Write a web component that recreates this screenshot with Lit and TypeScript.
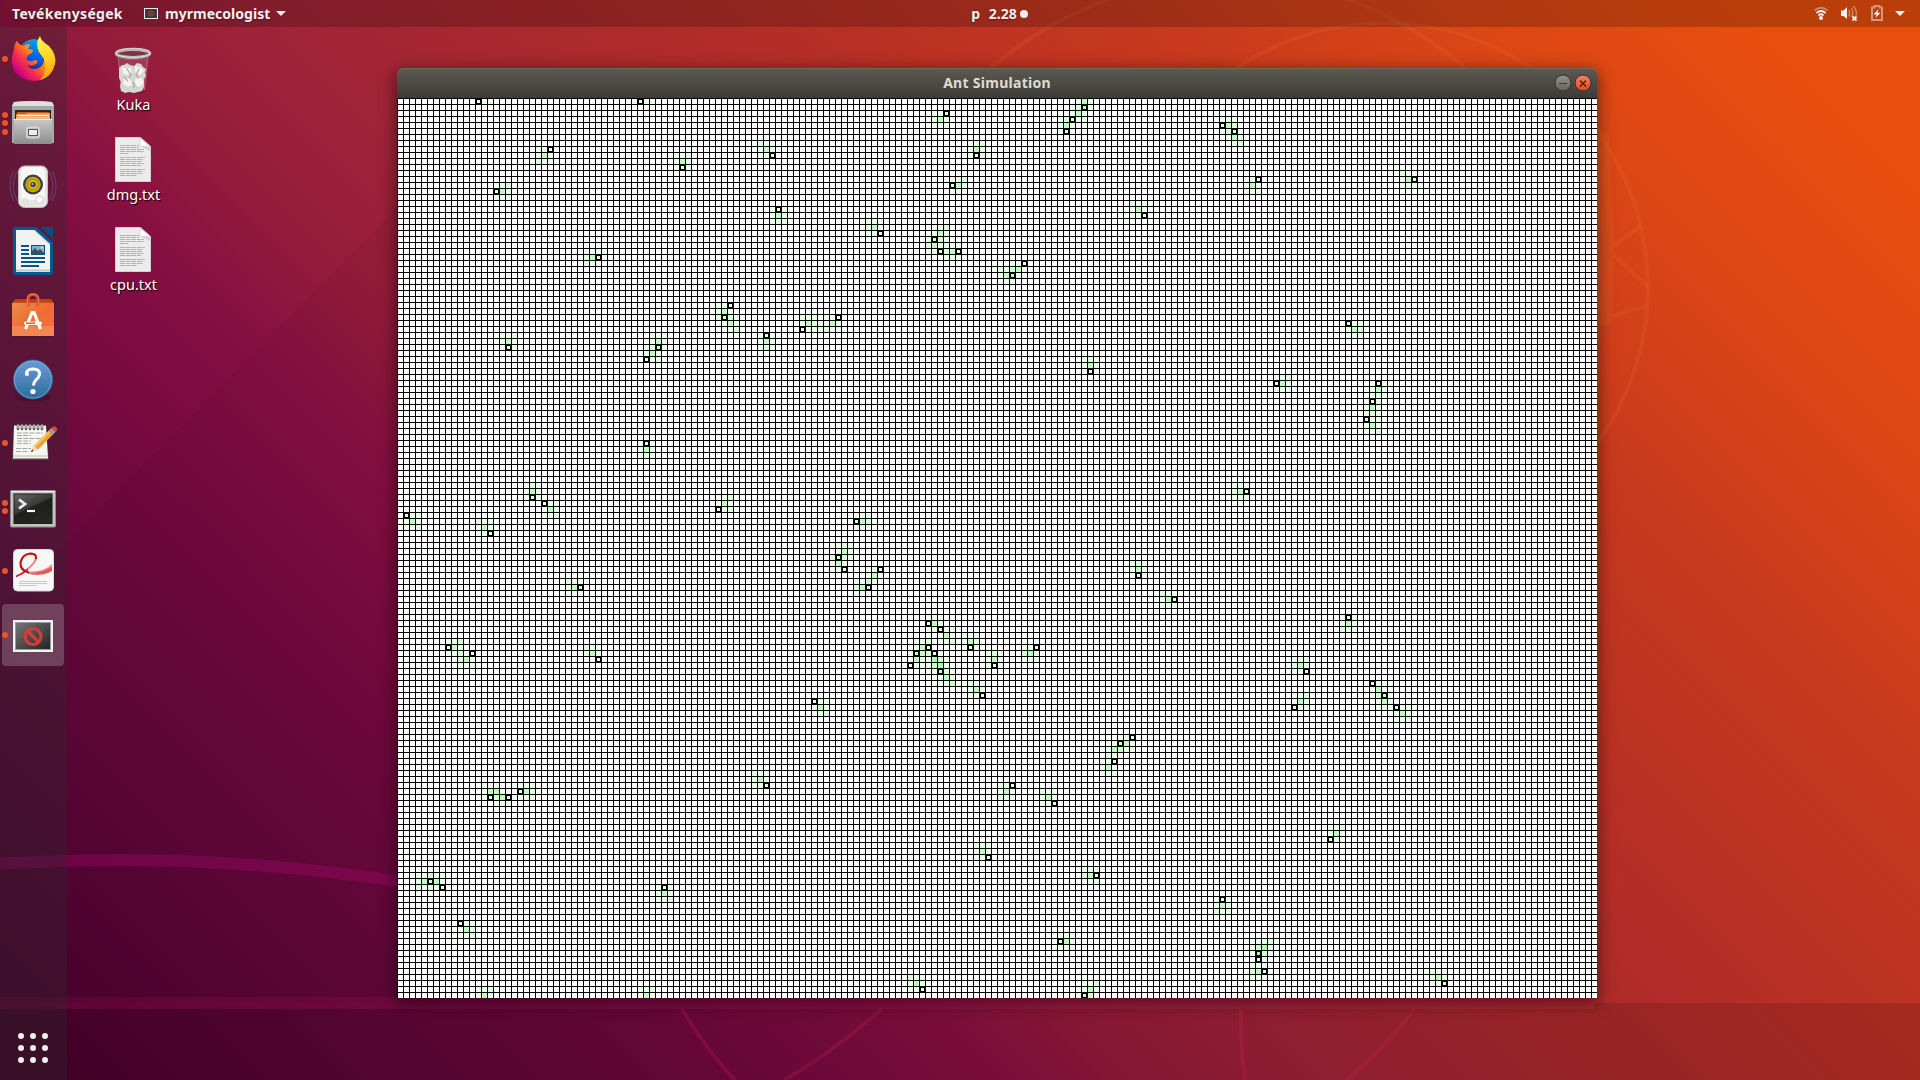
import { LitElement, html, css, svg } from "lit";
import { customElement } from "lit/decorators.js";

const COLS = 200;
const ROWS = 150;
const CELL = 6;

/** column, row of an ant; column, row of its last deposit; optionally the deposit before that */
const ANTS: number[][] = [
  [13, 0, 14, 149], [40, 0, 41, 149], [25, 8, 24, 9, 23, 10], [47, 11, 47, 10, 48, 9], [62, 9, 61, 8, 60, 7],
  [16, 15, 17, 15, 18, 14], [63, 18, 63, 19], [33, 26, 32, 26, 31, 27], [55, 34, 54, 35], [54, 36, 55, 37, 56, 38],
  [61, 39, 61, 40], [18, 41, 18, 40, 19, 39], [43, 41, 43, 40, 42, 39], [41, 43, 42, 42], [41, 57, 41, 58],
  [22, 66, 22, 65], [24, 67, 25, 68, 26, 69], [1, 69, 2, 70, 3, 71], [15, 72, 14, 71], [53, 68, 54, 67, 55, 66],
  [30, 81, 29, 81, 28, 80], [8, 91, 9, 91, 10, 90], [12, 92, 11, 93, 10, 93], [33, 93, 32, 92],
  [15, 116, 15, 115, 16, 115], [18, 116, 17, 116, 16, 115], [20, 115, 21, 115, 22, 115], [61, 114, 60, 113, 59, 112],
  [5, 130, 4, 130, 3, 131], [7, 131, 6, 130], [44, 131, 44, 132, 45, 133], [10, 137, 11, 138],
  [91, 2, 90, 3, 89, 3], [114, 1, 114, 0], [112, 3, 113, 2], [111, 5, 111, 4], [96, 9, 96, 8, 97, 7],
  [92, 14, 93, 14, 94, 13], [124, 19, 123, 18, 122, 17], [80, 22, 79, 21, 78, 21], [89, 23, 90, 22, 91, 21],
  [90, 25, 89, 24, 88, 24], [93, 25, 92, 25], [104, 27, 103, 28], [102, 29, 101, 29, 100, 28],
  [73, 36, 72, 37, 71, 38], [67, 38, 68, 37, 69, 37], [115, 45, 115, 44], [76, 70, 77, 70, 78, 70],
  [73, 76, 74, 75, 74, 74], [74, 78, 73, 77], [80, 78, 79, 79], [78, 81, 77, 81, 76, 81], [123, 79, 123, 78],
  [129, 83, 128, 83, 127, 82], [88, 87, 89, 87], [90, 88, 91, 89], [86, 92, 87, 91], [88, 91, 90, 94],
  [89, 92, 89, 93], [85, 94, 86, 93], [90, 95, 91, 96], [95, 91, 95, 90, 96, 89], [99, 94, 99, 93],
  [106, 91, 105, 92, 104, 92], [97, 99, 96, 98], [69, 100, 70, 101], [120, 107, 119, 108], [122, 106, 121, 107],
  [119, 110, 118, 111, 117, 111], [102, 114, 101, 115], [109, 117, 108, 116, 107, 115], [98, 126, 97, 125],
  [116, 129, 115, 129, 114, 129], [110, 140, 111, 140, 112, 141], [87, 148, 86, 147], [114, 149, 115, 148],
  [137, 4, 138, 4], [139, 5, 139, 6, 140, 7], [143, 13, 142, 14, 141, 15], [169, 13, 168, 13, 167, 12],
  [158, 37, 159, 38, 160, 38], [146, 47, 147, 47, 148, 46], [163, 47, 163, 48], [162, 50, 162, 51],
  [161, 53, 162, 54], [141, 65, 140, 65, 139, 65], [158, 86, 158, 87, 157, 88], [151, 95, 150, 94, 149, 94],
  [162, 97, 163, 98], [164, 99, 164, 100], [166, 101, 167, 102], [149, 101, 150, 100, 151, 99],
  [155, 123, 156, 122], [137, 133, 137, 134, 136, 135], [143, 142, 144, 141, 145, 140], [143, 143, 143, 142],
  [144, 145, 143, 145], [174, 147, 173, 146],
];

/** Scent strength per cell; the field wraps round at its edges. */
function scentField(): Map<number, number> {
  const field = new Map<number, number>();
  const add = (c: number, r: number, v: number) => {
    const key = ((r + ROWS) % ROWS) * COLS + ((c + COLS) % COLS);
    field.set(key, (field.get(key) ?? 0) + v);
  };
  for (const [ac, ar, c, r, pc, pr] of ANTS) {
    for (let dr = -1; dr <= 1; dr++)
      for (let dc = -1; dc <= 1; dc++) add(c + dc, r + dr, dr || dc ? 20 : 66);
    const wraps = Math.abs(r - ar) > 9;
    add(pc ?? (wraps ? c + 1 : 2 * c - ac), pr ?? (wraps ? r - 1 : 2 * r - ar), 15);
  }
  // two crossing paths leave a faint stretch between them
  add(70, 37, 20);
  add(70, 38, 20);
  return field;
}

@customElement("ant-field")
class AntField extends LitElement {
  static styles = css`
    :host { display: block; width: 1200px; height: 900px; }
    svg { display: block; }
  `;
  render() {
    const field = scentField();
    return html`<svg width="1200" height="900" shape-rendering="crispEdges">
      <defs>
        <pattern id="g" width="6" height="6" patternUnits="userSpaceOnUse">
          <rect width="6" height="6" fill="#000" /><rect x="1" y="1" width="5" height="5" fill="#fff" />
        </pattern>
      </defs>
      <rect width="1200" height="900" fill="url(#g)" />
      ${[...field].map(([key, v]) => {
        const level = Math.max(120, 255 - v);
        return svg`<rect x=${(key % COLS) * CELL + 1} y=${Math.floor(key / COLS) * CELL + 1} width="5" height="5"
          fill=${`rgb(${level},255,${level})`} />`;
      })}
      ${ANTS.map(([c, r]) => svg`<rect x=${c * CELL + 1} y=${r * CELL + 1} width="5" height="5" fill="none"
          stroke="#000" stroke-width="2" />`)}
    </svg>`;
  }
}

const sheet = svg`
  <path d="M.5.5H25.500L35.500 9.500V44.500H.5z" fill="#ececec" stroke="#cfcfcf"/>
  <path d="M25 1v7q0 1.500 1.500 1.500H35.500z" fill="#fff" stroke="#c9c9c9" stroke-width=".7"/>
  <path d="M25.500 9.500L35 14V9.500z" fill="#d5d5d5"/>
  <path d="M5 8.500H24M5 10.500H24M5 12.500H29M5 14.500H29M5 16.500H13M5 20.500H30M5 22.500H28M5 24.500H27M5 26.500H29M5 28.500H26M5 32.500H30M5 34.500H28M5 36.500H28M5 38.500H22" stroke="#b2b2b2" stroke-dasharray="5 .6"/>`;

const trash = svg`<g transform="translate(0 1)">
  <path d="M3 7L6.500 42Q18 47 29.500 42L33 7z" fill="#fff" fill-opacity=".13" stroke="#e5c5cf" stroke-opacity=".4"/>
  <ellipse cx="18" cy="43" rx="12" ry="2.300" fill="#3b1020" opacity=".55"/>
  <path d="M4 20l3-3 2 0 3-2 3 2 4 1 3-3 4 1 2 3 3 2-1 4 1 3-2 3v4l0 4-2 4-4 1-4 1-5-1-4 1-4-2-1-5 1-4-2-4z" fill="#d6d7d3"/>
  <path d="M7 19l5 2 3-2 2 5-5 3-4-2zM20 18l6 2 3 3-4 4-5-3zM9 30l6 1 3 5-5 3-5-3zM20 31l6-1 3 4-4 5-5-2z" fill="#f3f3f1"/>
  <path d="M12 21l4 6-2 3M24 21l-3 6 3 3M17 34l3 3-2 3M9 29l4 4" stroke="#a9aaa6" stroke-width="1.200" fill="none"/>
  <ellipse cx="18" cy="5.500" rx="16.800" ry="4" fill="#7b3148" stroke="#b4b7b3" stroke-width="3"/>
  <ellipse cx="18" cy="4.800" rx="17.500" ry="4.600" fill="none" stroke="#e4e6e2" stroke-width=".8"/>
  <path d="M2 9Q18 14.500 34 9" fill="none" stroke="#6d716e"/></g>`;

const firefox = svg`
  <defs>
    <linearGradient id="fo" x1=".9" y1=".1" x2=".15" y2=".85"><stop offset="0" stop-color="#ffe226"/><stop offset=".35" stop-color="#ff980e"/><stop offset=".65" stop-color="#ff3647"/><stop offset="1" stop-color="#c60084"/></linearGradient>
    <linearGradient id="fb" x1=".7" y1="0" x2=".4" y2="1"><stop offset="0" stop-color="#00a5f5"/><stop offset=".6" stop-color="#0a5fe0"/><stop offset="1" stop-color="#352277"/></linearGradient>
    <linearGradient id="fy" x1=".3" y1="0" x2=".6" y2="1"><stop offset="0" stop-color="#fff44f"/><stop offset=".55" stop-color="#ffd21f"/><stop offset="1" stop-color="#ff9a12"/></linearGradient>
  </defs>
  <path d="M8 6Q10 10 13 10Q20 3 29 5L45 21Q47 30 42 37Q35 46 24 46Q12 45 6 37Q0 27 5 15Q5 9 8 6z" fill="url(#fo)"/>
  <path d="M13 10Q19 4 28 5Q38 14 36 24Q34 35 24 35Q18 35 15 30L13 18z" fill="url(#fb)"/>
  <path d="M5 15Q6 10 8 6Q9 10 13 11Q18 9 21 9L19 14 24 15Q24 18 19 20L17 24Q21 28 26 25Q29 25 28 28Q24 32 18 30Q22 36 30 33Q36 30 35 22Q43 33 30 43Q12 47 6 34Q3 26 5 15z" fill="url(#fo)"/>
  <path d="M31 1Q32 6 40 11Q48 20 46 29Q43 42 31 45Q40 35 35 24L30 17Q26 8 31 1z" fill="url(#fy)"/>`;

const files = svg`
  <defs><linearGradient id="ca" x2="0" y2="1"><stop offset="0" stop-color="#c9c9c9"/><stop offset="1" stop-color="#8d8d8d"/></linearGradient></defs>
  <path d="M5 2Q24 0 43 2L45 6V43H3V6z" fill="#a8a8a8"/><path d="M5 2Q24 0 43 2L45 6H3z" fill="#dedede"/>
  <path d="M6 10H42V20H6z" fill="#2c2420"/><path d="M8 12H40V19H7z" fill="#c25a1e"/><path d="M7 14H17L18 13H41V20H7z" fill="#ef9440"/>
  <path d="M9 15.500H40" stroke="#fff4e0" stroke-width="1.500"/><path d="M7 18H41" stroke="#f2e0c8"/>
  <path d="M5 19H43V44H5z" fill="url(#ca)"/><path d="M5 19.500H43" stroke="#ededed"/>
  <rect x="18" y="27.500" width="12" height="10" rx="2" fill="#aaa" stroke="#d4d4d4" stroke-width="2"/><rect x="19.500" y="29.500" width="9" height="6" fill="#ededed" stroke="#555"/>
  <path d="M5 44.500H43" stroke="#4a2036" stroke-opacity=".6"/>`;

const speaker = svg`
  <path d="M5 8Q-3 23 5 38M8.500 8Q0 23 8.500 38M43 8Q51 23 43 38M39.500 8Q48 23 39.500 38" fill="none" stroke="#6c6ba8" stroke-opacity=".4" stroke-width="1.200"/>
  <rect x="9.500" y="3" width="29" height="41.500" rx="6" fill="#e6e6e3" stroke="#bdbdba"/><rect x="12" y="4" width="24" height="33" rx="5" fill="#f7f7f5"/>
  <circle cx="24" cy="21.500" r="10" fill="#3c4044"/><circle cx="24" cy="21.500" r="7.700" fill="#c9a90b"/><circle cx="24" cy="21.500" r="5.200" fill="#dcc012" stroke="#8a7403" stroke-width=".8"/><circle cx="24" cy="21.500" r="2.800" fill="#3e4246"/><circle cx="23.500" cy="21" r="1.200" fill="#9da1a5"/>
  <circle cx="30.500" cy="36.500" r="3.700" fill="#fff" stroke="#cfcfcb"/><rect x="14.500" y="36" width="4" height="4" rx="1" fill="none" stroke="#d8d8d4"/>`;

const writer = svg`
  <path d="M4 2.500Q4 0 6.500 0H27L44 15V45Q44 48 41.500 48H6.500Q4 48 4 45.500z" fill="#005b91"/><path d="M31 0H42Q44 0 44 2V12z" fill="#0a4f82"/>
  <path d="M7 3H25.500L41 17V45H7z" fill="#f2f2f0"/><path d="M25.500 3L41 17V19L24 3z" fill="#cfe0ea"/><path d="M7 43.500H41" stroke="#c4c4c4" stroke-width="2"/>
  <path d="M12 19H20M12 23H20M12 27H20M12 31H36M12 35H36M12 39H30" stroke="#0a5585" stroke-width="1.800"/>
  <rect x="22.500" y="18.500" width="13" height="9" fill="#68b7e5" stroke="#0a5585"/><path d="M23 27v-3l3-3 3 3 2-2 4 4v1z" fill="#4a4a44"/><circle cx="33" cy="20.500" r="1.300" fill="#f3cf5a"/>`;

const software = svg`
  <defs><linearGradient id="bg" x1="0" y1="0" x2="1" y2="1"><stop offset="0" stop-color="#e98d4c"/><stop offset=".5" stop-color="#ee6d34"/><stop offset="1" stop-color="#f0753b"/></linearGradient></defs>
  <path d="M4 8L6 4.500H42L44 8V12H4z" fill="#b7410f"/><path d="M4 7H44V12H4z" fill="#cc4e17"/>
  <path d="M3 8.500H45V41.500H3z" fill="url(#bg)"/><path d="M3 31.500H45V41.500H3z" fill="#f49462" opacity=".6"/><path d="M5 42.300H43" stroke="#3a1020" stroke-opacity=".4"/>
  <path d="M19 12V5Q19 0 24 0Q29 0 29 5V12" fill="none" stroke="#d9531e" stroke-width="3"/><path d="M18.500 12V4Q19 -.5 24 -.5Q29 -.5 29.500 4V12" fill="none" stroke="#f4845a" stroke-width=".8"/>
  <path d="M16.500 34.500L23 18H25L31.500 34.500" fill="none" stroke="#fff" stroke-width="3.200"/><rect x="15" y="27" width="18" height="3.500" rx="1.700" fill="#fff"/><path d="M17 28.700H26" stroke="#ee5a1e" stroke-width="1.500"/>`;

const help = svg`
  <defs><linearGradient id="hb" x2="0" y2="1"><stop offset="0" stop-color="#6d9bd6"/><stop offset="1" stop-color="#2a6d9c"/></linearGradient></defs>
  <ellipse cx="24" cy="41" rx="18" ry="4" fill="#2c0820" opacity=".3"/>
  <circle cx="24" cy="23" r="19.500" fill="url(#hb)" stroke="#2f659b"/><circle cx="24" cy="23" r="18.500" fill="none" stroke="#8fb8e6" stroke-opacity=".6"/>
  <path d="M17.500 18Q17 12.500 24 12.500Q31 12.500 30.500 18Q30 21 26.500 24Q24.500 26 24.500 29" fill="none" stroke="#fff" stroke-width="3"/><circle cx="18" cy="17.500" r="2" fill="#fff"/><circle cx="24" cy="35" r="2.600" fill="#fff"/>`;

const notes = svg`
  <path d="M5 9H37L40 42.500H3z" fill="#454540"/><path d="M5 8H37L39 41H4z" fill="#f5f5f2"/><path d="M4 38.500H39" stroke="#cfcfca" stroke-width="1.500"/>
  <path d="M9 7.500v4M13 7.500v4M17 7.500v4M21 7.500v4M25 7.500v4M29 7.500v4M33 7.500v4" stroke="#55564f" stroke-width="2.600" stroke-linecap="round"/><path d="M9 7.500v3M13 7.500v3M17 7.500v3M21 7.500v3M25 7.500v3M29 7.500v3M33 7.500v3" stroke="#e0e0dc" stroke-width="1.200" stroke-linecap="round"/>
  <path d="M8 15.500H34M8 18H22M8 21H33M8 23.500H22M8 26H22M7 31H22M7 34H20" stroke="#a5a5a0" stroke-dasharray="5 1.200"/>
  <path d="M22 34.500L25 28 41 12 45 16 29 32z" fill="#f0a02f"/><path d="M25 28L41 12l1.500 1.500L27 29.500z" fill="#fbc564"/><path d="M22 34.500L25 28l4 4z" fill="#f0dcb8"/><path d="M22 34.500l1-2.500 1.500 1.500z" fill="#222"/>
  <path d="M39.500 13.500L43 10l4 4-3.500 3.500z" fill="#9b9b95"/><path d="M42.500 10.500Q45 7.500 47.500 10Q49.500 12.500 46.500 14.500z" fill="#e0413f"/>`;

const terminal = svg`
  <defs><linearGradient id="tm" x1="0" y1="0" x2=".6" y2="1"><stop offset="0" stop-color="#666"/><stop offset=".5" stop-color="#393b39"/><stop offset=".55" stop-color="#1d1f1d"/><stop offset="1" stop-color="#242624"/></linearGradient></defs>
  <rect x="1.500" y="5.500" width="45" height="36.500" rx="1" fill="#c2c2bf" stroke="#8d8d8a"/><path d="M2 6.500H46" stroke="#f4f4f1"/>
  <rect x="5" y="9" width="38" height="29.500" fill="url(#tm)" stroke="#1a1c1a"/>
  <path d="M10 14.500L16 19L10 23.500" fill="none" stroke="#ededea" stroke-width="2.800"/><path d="M18 26H26" stroke="#fff" stroke-width="2.200"/>`;

const reader = svg`
  <rect x="4" y="3.500" width="41" height="42" rx="4" fill="#3d1830" opacity=".6"/>
  <rect x="4.500" y="2.500" width="40" height="41.500" rx="4" fill="#f6f6f5" stroke="#d8d8d8"/>
  <path d="M43 17Q35 25 20 24.500L17 26Q32 31 43 24z" fill="#ee9090"/>
  <path d="M17 26Q30 27 43 20V24Q31 30 17 26z" fill="#dd4a4a" opacity=".8"/>
  <path d="M7 29.500Q19 23.500 25.500 15Q29.500 7 22 6.800" fill="none" stroke="#e88484" stroke-width="2"/>
  <path d="M7 29.500Q14 27 19 22" fill="none" stroke="#c61018" stroke-width="1.200"/>
  <path d="M20 25.500Q11 23.500 11.500 15.500Q13 7.500 21.500 6.500Q28 6.500 27 12" fill="none" stroke="#cc0812" stroke-width="2.100"/>
  <path d="M10 34.500H38M10 36.500H38M10 38.500H28" stroke="#c8c8c8"/>`;

const unknown = svg`
  <defs><linearGradient id="un" x1="0" y1="0" x2="1" y2="1"><stop offset="0" stop-color="#777"/><stop offset="1" stop-color="#222"/></linearGradient></defs>
  <rect x="4" y="8" width="40" height="32" fill="#f3f3f3"/><rect x="6.500" y="10.500" width="35" height="27" fill="url(#un)" stroke="#9b9b9b"/>
  <g fill="none" stroke="#cf3f38" stroke-width="3.200"><circle cx="24" cy="24.500" r="8"/><path d="M18 18.500L30 30.500"/></g>`;

const DOCK = [
  { icon: firefox, dots: 1, dy: 0 }, { icon: files, dots: 3, dy: 1 }, { icon: speaker, dots: 0, dy: 0 },
  { icon: writer, dots: 0, dy: 0 }, { icon: software, dots: 0, dy: 3.5 }, { icon: help, dots: 0, dy: 1.5 },
  { icon: notes, dots: 1, dy: -1.5 }, { icon: terminal, dots: 2, dy: 2 }, { icon: reader, dots: 1, dy: 0 },
  { icon: unknown, dots: 1, dy: 1, active: true },
];

@customElement("app-root")
class AppRoot extends LitElement {
  static styles = css`
    :host {
      display: flex; flex-direction: column; position: relative; width: 1920px; height: 1080px; overflow: hidden;
      font-family: "Noto Sans", "Open Sans", sans-serif; color: #eee;
      background: linear-gradient(45deg, #42002a 0%, #5a0638 13%, #72093f 25%, #860f42 33%, #951b3c 38%, #a12436 45%, #ab2a2c 54%, #b93024 64%, #c6381e 73%, #db4616 84%, #e84e0d 94%);
    }
    svg { display: block; overflow: visible; }
    .wall { position: absolute; left: 0; top: 0; }
    .bar { position: relative; display: grid; grid-template-columns: 1fr auto 1fr; align-items: center; height: 27px; background: rgba(0, 0, 0, 0.2); font-weight: 700; font-size: 14px; }
    .left { display: flex; align-items: center; padding-left: 12px; }
    .app { display: flex; align-items: center; margin-left: 22px; }
    .app span { margin: 0 6px 0 7px; letter-spacing: 0.03px; }
    .act, .app span, .clock span { text-shadow: 0 1px 2px rgba(0, 0, 0, 0.4); white-space: pre; }
    .act { width: 110px; letter-spacing: 0.3px; }
    .clock { display: flex; align-items: center; gap: 3px; padding-left: 79px; }
    .clock span { word-spacing: 0.7px; }
    .dot { width: 8px; height: 8px; border-radius: 50%; background: #eee; }
    .tray { justify-self: end; margin-right: 12px; }
    .body { display: flex; flex: 1; position: relative; }
    .dock { width: 67px; display: flex; flex-direction: column; background: rgba(44, 44, 44, 0.34); }
    .slot { height: 64px; display: flex; align-items: center; }
    .marks { width: 9px; display: flex; flex-direction: column; align-items: center; gap: 2.5px; }
    .marks i { width: 6px; height: 6px; border-radius: 50%; background: #e95420; }
    .slot.active { height: 62px; margin: 1px 3px 1px 2px; border-radius: 4px; background: rgba(255, 255, 255, 0.2); }
    .slot.active .marks { width: 7px; margin-left: 0; }
    .slot.active .marks i { margin-right: 1px; }
    .grid { margin: auto 0 17px 18px; width: 30px; display: grid; grid-template-columns: repeat(3, 6px); gap: 6px; }
    .grid i { width: 6px; height: 6px; border-radius: 50%; background: #eee; }
    .desk { width: 132px; padding-top: 20px; }
    .file { height: 90px; display: flex; flex-direction: column; align-items: center; font-size: 14.5px; line-height: 20px; text-shadow: 1px 1px 1px #000; color: #fff; }
    .file svg { margin-bottom: 1px; }
    .file span { padding-left: 1px; }
    .win { position: absolute; left: 397px; top: 41px; width: 1200px; border-radius: 7px 7px 0 0; box-shadow: 0 4px 16px 2px rgba(0, 0, 0, 0.48); }
    .title { height: 30px; display: grid; grid-template-columns: 1fr auto 1fr; align-items: center; border-radius: 7px 7px 0 0; background: linear-gradient(#5d5a51, #3c3b37); box-shadow: inset 0 1px #6c695e; font-size: 14px; font-weight: 700; color: #dfdbd2; }
    .buttons { grid-column: 3; justify-self: end; display: flex; gap: 4px; margin-right: 6px; }
    .title span { grid-column: 2; letter-spacing: 0.28px; padding-bottom: 2px; }
  `;

  render() {
    return html`
      <svg class="wall" width="1920" height="1080">
        <path d="M0 610L440 165V1002H0z" fill="#300018" opacity=".06" />
        <path d="M0 1009H1594L1596 1003H1920V1080H0z" fill="#200008" opacity=".14" />
        <path d="M0 997H1595L1594 1009H0z" fill="#c8145e" opacity=".16" />
        <path d="M-2 863.700A1880 1880 0 0 1 420 884.700" fill="none" stroke="#a80a70" stroke-opacity=".34" stroke-width="12" />
        <g fill="none" stroke="#f08040" stroke-opacity=".13" stroke-width="4">
          <circle cx="1384" cy="287" r="264" /><circle cx="1228" cy="339" r="360" />
          <path d="M1614 245L1641 226M1614 255L1648 287M1612 316L1647 306" />
        </g>
        <path d="M1590 122L1609 135L1614 240L1612 323L1590 330z" fill="#f08030" opacity=".14" />
        <g fill="none" stroke="#d82a5a" stroke-opacity=".2" stroke-width="4">
          <path d="M682 1009Q706 1050 735 1080M882 1009Q830 1054 784 1080M1241 1009Q1240 1045 1245 1080M1414 1009Q1385 1048 1347 1080" />
        </g>
      </svg>
      <div class="bar">
        <div class="left">
          <span class="act">Tevékenységek</span>
          <div class="app">
            <svg width="14" height="11"><rect x=".5" y=".5" width="13" height="10" fill="#3b3b3b" stroke="#eee" /><circle cx="7" cy="5.500" r="2.500" fill="none" stroke="#c6342e" /><path d="M5.500 4L8.500 7" stroke="#c6342e" /></svg>
            <span>myrmecologist</span>
            <svg width="10" height="5"><path d="M0 0H10L5 5z" fill="#eee" /></svg>
          </div>
        </div>
        <div class="clock"><span>p  2.28</span><div class="dot"></div></div>
        <svg class="tray" width="96" height="27">
          <g fill="none" stroke="#f2f2f2" stroke-width="1.900">
            <path d="M2.500 10.500Q9 5 15.500 10.500" stroke-opacity=".4" /><path d="M4.500 13Q9 9 13.500 13" /><path d="M6.500 15.500Q9 13.200 11.500 15.500" />
          </g>
          <circle cx="9" cy="18" r="2" fill="#f2f2f2" />
          <path d="M29 10.500H31.500L35 7V19L31.500 16H29z" fill="#f2f2f2" />
          <g fill="none" stroke="#f2f2f2" stroke-opacity=".4" stroke-width="1.500"><path d="M37 10Q38.500 13 37 16.500M39.500 8Q42 13 39.500 17M41.500 6Q45.500 11 44 16" /></g>
          <path d="M40.500 16.500L44.500 20.500M44.500 16.500L40.500 20.500" stroke="#f2f2f2" stroke-width="1.900" />
          <path d="M60 7.500H62.500V6H67.500V7.500H70V20H60z" fill="none" stroke="#f2f2f2" stroke-opacity=".5" stroke-width="2" />
          <path d="M66.500 9L61.500 14.500H64.500L63.500 18L68.500 12.700H65.500z" fill="#f2f2f2" />
          <path d="M83 11H93L88 16z" fill="#f2f2f2" />
        </svg>
      </div>
      <div class="body">
        <div class="dock">
          ${DOCK.map((d) => html`<div class="slot ${d.active ? "active" : ""}">
            <div class="marks">${Array.from({ length: d.dots }, () => html`<i></i>`)}</div>
            <svg width="48" height="48" viewBox="0 ${-d.dy} 48 48">${d.icon}</svg>
          </div>`)}
          <div class="grid">${Array.from({ length: 9 }, () => html`<i></i>`)}</div>
        </div>
        <div class="desk">
          <div class="file"><svg width="36" height="46">${trash}</svg><span>Kuka</span></div>
          <div class="file"><svg width="36" height="46">${sheet}</svg><span>dmg.txt</span></div>
          <div class="file"><svg width="36" height="46">${sheet}</svg><span>cpu.txt</span></div>
        </div>
        <div class="win">
          <div class="title">
            <span>Ant Simulation</span>
            <div class="buttons">
              <svg width="16" height="16"><defs><linearGradient id="bm" x2="0" y2="1"><stop offset="0" stop-color="#96938a" /><stop offset="1" stop-color="#65635c" /></linearGradient></defs><circle cx="8" cy="8" r="8" fill="url(#bm)" stroke="#33322e" /><path d="M4 8.500H12" stroke="#3c3b37" /></svg>
              <svg width="16" height="16"><defs><linearGradient id="bc" x2="0" y2="1"><stop offset="0" stop-color="#f58465" /><stop offset="1" stop-color="#dd4818" /></linearGradient></defs><circle cx="8" cy="8" r="8" fill="url(#bc)" stroke="#33322e" /><path d="M5 5.500L11 11.500M11 5.500L5 11.500" stroke="#4a1c0c" stroke-width="1.400" /></svg>
            </div>
          </div>
          <ant-field></ant-field>
        </div>
      </div>`;
  }
}
